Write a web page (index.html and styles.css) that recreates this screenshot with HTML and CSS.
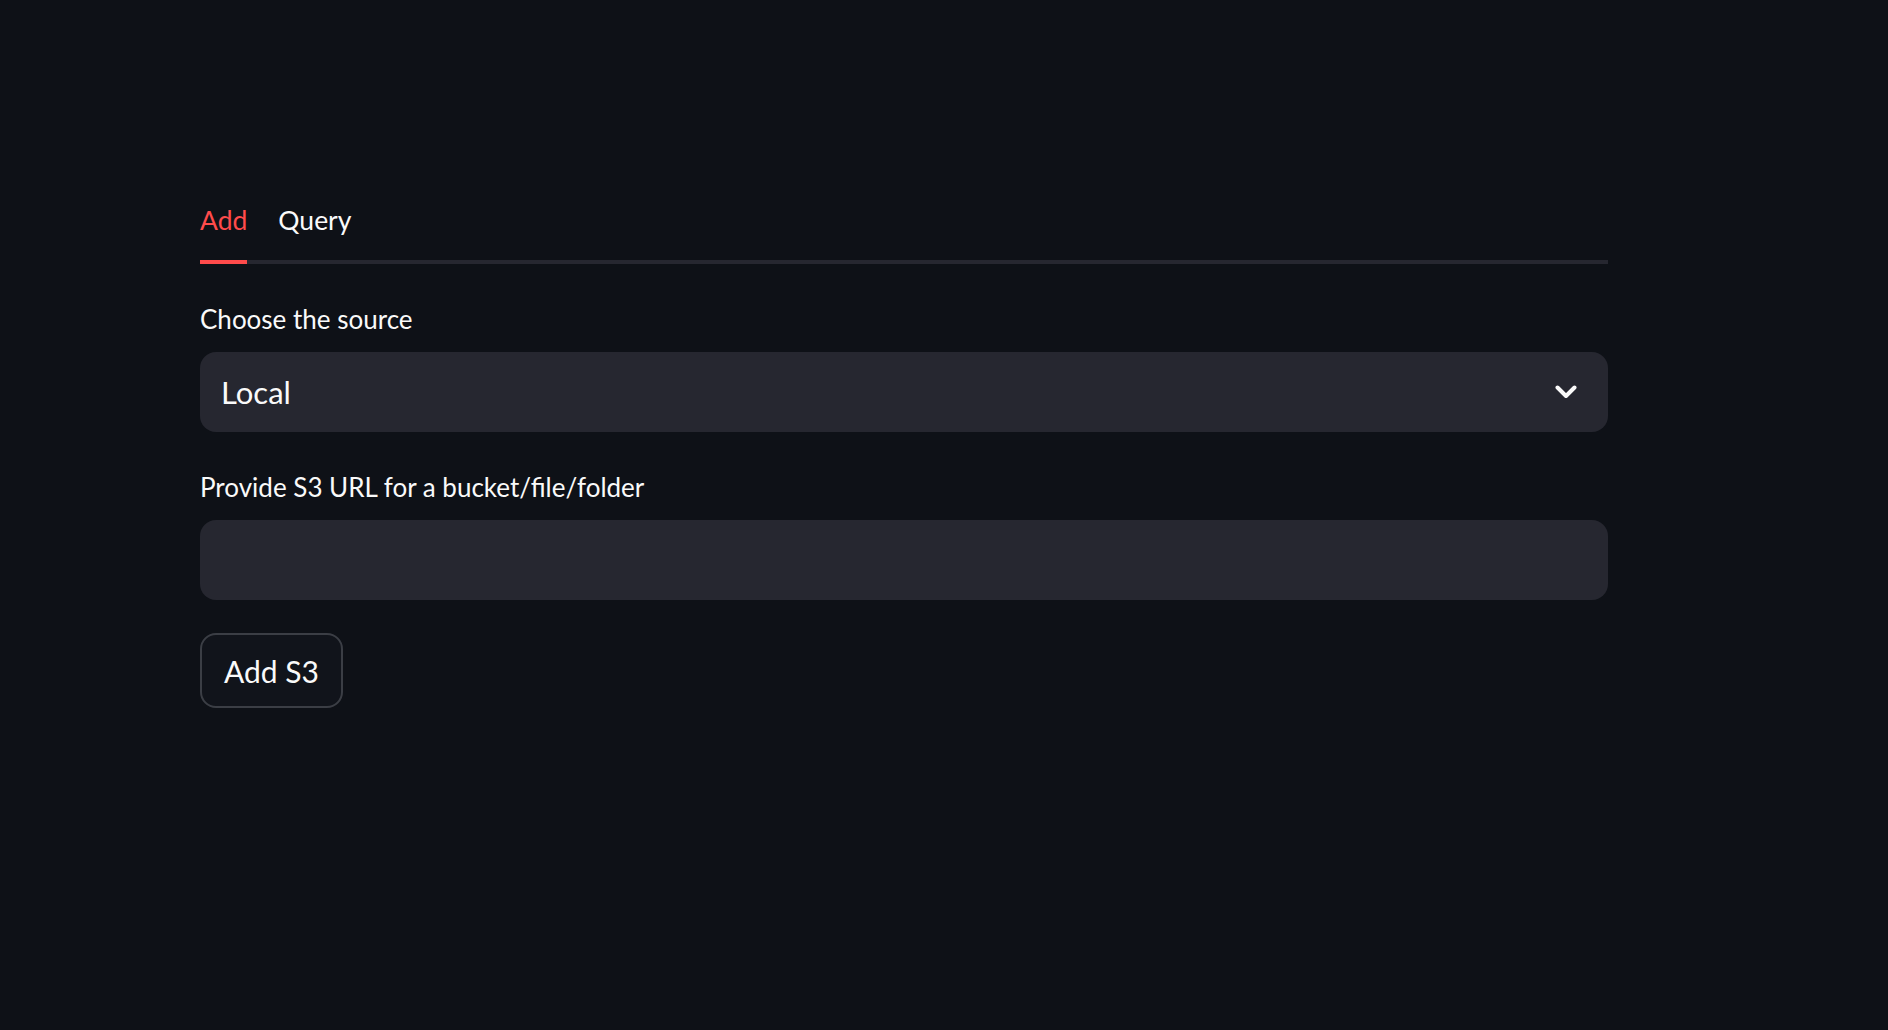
FILE: index.html
```html
<!DOCTYPE html>
<html lang="en">
<head>
<meta charset="utf-8">
<title>Add source</title>
<link rel="stylesheet" href="styles.css">
</head>
<body>
<main class="main">
  <div class="tabs">
    <div class="tab-list">
      <button class="tab tab-active">Add</button>
      <button class="tab">Query</button>
    </div>
  </div>
  <section class="panel">
    <div class="field">
      <label class="label">Choose the source</label>
      <div class="select">
        <span class="select-value">Local</span>
        <svg class="chevron" width="22" height="14" viewBox="0 0 22 14" aria-hidden="true">
          <path d="M2.5 2.5 L11 11 L19.5 2.5" fill="none" stroke="#fafafa" stroke-width="4" stroke-linecap="round" stroke-linejoin="round"/>
        </svg>
      </div>
    </div>
    <div class="field">
      <label class="label">Provide S3 URL for a bucket/file/folder</label>
      <div class="input"></div>
    </div>
    <button class="btn">Add S3</button>
  </section>
</main>
</body>
</html>
```

FILE: styles.css
```css
* { box-sizing: border-box; }
html, body {
  margin: 0;
  padding: 0;
  background: #0e1117;
  color: #fafafa;
  font-family: "Lato", "Noto Sans", "Liberation Sans", sans-serif;
  height: 100%;
}
.main {
  padding: 180px 0 0 200px;
  width: 1608px;
}
.tabs {
  border-bottom: 4px solid #262730;
}
.tab-list {
  display: flex;
  gap: 31px;
  margin-bottom: -4px;
}
.tab {
  background: none;
  border: none;
  padding: 0;
  height: 84px;
  font-family: inherit;
  font-size: 26.5px;
  color: #fafafa;
  border-bottom: 4px solid transparent;
  line-height: 80px;
  cursor: pointer;
}
.tab-active {
  color: #ff4b4b;
  border-bottom-color: #ff4b4b;
}
.panel {
  padding-top: 33px;
  display: flex;
  flex-direction: column;
  align-items: flex-start;
}
.field {
  width: 100%;
  margin-bottom: 33px;
}
.label {
  display: block;
  font-size: 26px;
  line-height: 44px;
  margin-bottom: 11px;
  color: #fafafa;
}
.select, .input {
  height: 80px;
  width: 100%;
  background: #262730;
  border-radius: 16px;
}
.select {
  display: flex;
  align-items: center;
  justify-content: space-between;
  padding: 0 31px 0 21px;
}
.select-value {
  font-size: 31px;
}
.chevron { display: block; }
.btn {
  height: 75px;
  width: 143px;
  padding: 0;
  background: #11141b;
  border: 2px solid #3b3e45;
  border-radius: 16px;
  color: #fafafa;
  font-family: inherit;
  font-size: 30px;
}
```
